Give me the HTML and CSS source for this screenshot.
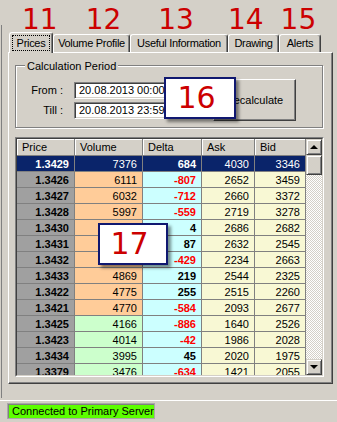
FILE: index.html
```html
<!DOCTYPE html>
<html>

<head>
	<meta charset="utf-8">
	<meta name="viewport" content="width=device-width, initial-scale=1">
	<title>Prices</title>
	<link rel="stylesheet" href="styles.css">
</head>

<body>
	<div class="callouts">
		<span class="callout n11">11</span>
		<span class="callout n12">12</span>
		<span class="callout n13">13</span>
		<span class="callout n14">14</span>
		<span class="callout n15">15</span>
	</div>

	<div class="frame">
		<div class="tabs">
			<div class="tab active t-prices"><span class="focus">Prices</span></div>
			<div class="tab t-volume">Volume Profile</div>
			<div class="tab t-useful">Useful Information</div>
			<div class="tab t-drawing">Drawing</div>
			<div class="tab t-alerts">Alerts</div>
		</div>

		<div class="panel">
			<div class="group">
				<span class="group-title">Calculation Period</span>
				<div class="period-row">
					<div class="fields">
						<label>From :</label>
						<input type="text" class="field" readonly value="20.08.2013 00:00">
						<label>Till :</label>
						<input type="text" class="field" readonly value="20.08.2013 23:59">
					</div>
					<button class="btn">Recalculate</button>
				</div>
			</div>

			<div class="grid">
				<div class="grid-inner">
					<div class="grid-main">
						<div class="row head">
							<div class="cell price">Price</div>
							<div class="cell vol">Volume</div>
							<div class="cell delta">Delta</div>
							<div class="cell ask">Ask</div>
							<div class="cell bid">Bid</div>
						</div>
						<div class="row sel">
							<div class="cell price">1.3429</div>
							<div class="cell vol">7376</div>
							<div class="cell delta">684</div>
							<div class="cell ask">4030</div>
							<div class="cell bid">3346</div>
						</div>
						<div class="row">
							<div class="cell price">1.3426</div>
							<div class="cell vol hi">6111</div>
							<div class="cell delta neg">-807</div>
							<div class="cell ask">2652</div>
							<div class="cell bid">3459</div>
						</div>
						<div class="row">
							<div class="cell price">1.3427</div>
							<div class="cell vol hi">6032</div>
							<div class="cell delta neg">-712</div>
							<div class="cell ask">2660</div>
							<div class="cell bid">3372</div>
						</div>
						<div class="row">
							<div class="cell price">1.3428</div>
							<div class="cell vol hi">5997</div>
							<div class="cell delta neg">-559</div>
							<div class="cell ask">2719</div>
							<div class="cell bid">3278</div>
						</div>
						<div class="row">
							<div class="cell price">1.3430</div>
							<div class="cell vol hi">5711</div>
							<div class="cell delta">4</div>
							<div class="cell ask">2686</div>
							<div class="cell bid">2682</div>
						</div>
						<div class="row">
							<div class="cell price">1.3431</div>
							<div class="cell vol hi">5420</div>
							<div class="cell delta">87</div>
							<div class="cell ask">2632</div>
							<div class="cell bid">2545</div>
						</div>
						<div class="row">
							<div class="cell price">1.3432</div>
							<div class="cell vol hi">5063</div>
							<div class="cell delta neg">-429</div>
							<div class="cell ask">2234</div>
							<div class="cell bid">2663</div>
						</div>
						<div class="row">
							<div class="cell price">1.3433</div>
							<div class="cell vol hi">4869</div>
							<div class="cell delta">219</div>
							<div class="cell ask">2544</div>
							<div class="cell bid">2325</div>
						</div>
						<div class="row">
							<div class="cell price">1.3422</div>
							<div class="cell vol hi">4775</div>
							<div class="cell delta">255</div>
							<div class="cell ask">2515</div>
							<div class="cell bid">2260</div>
						</div>
						<div class="row">
							<div class="cell price">1.3421</div>
							<div class="cell vol hi">4770</div>
							<div class="cell delta neg">-584</div>
							<div class="cell ask">2093</div>
							<div class="cell bid">2677</div>
						</div>
						<div class="row">
							<div class="cell price">1.3425</div>
							<div class="cell vol lo">4166</div>
							<div class="cell delta neg">-886</div>
							<div class="cell ask">1640</div>
							<div class="cell bid">2526</div>
						</div>
						<div class="row">
							<div class="cell price">1.3423</div>
							<div class="cell vol lo">4014</div>
							<div class="cell delta neg">-42</div>
							<div class="cell ask">1986</div>
							<div class="cell bid">2028</div>
						</div>
						<div class="row">
							<div class="cell price">1.3434</div>
							<div class="cell vol lo">3995</div>
							<div class="cell delta">45</div>
							<div class="cell ask">2020</div>
							<div class="cell bid">1975</div>
						</div>
						<div class="row">
							<div class="cell price">1.3379</div>
							<div class="cell vol lo">3476</div>
							<div class="cell delta neg">-634</div>
							<div class="cell ask">1421</div>
							<div class="cell bid">2055</div>
						</div>
					</div>

					<div class="vscroll">
						<div class="sb-btn up"></div>
						<div class="sb-track">
							<div class="sb-thumb"></div>
						</div>
						<div class="sb-btn down"></div>
					</div>
				</div>
			</div>
		</div>
	</div>

	<div class="status">
		<span class="conn">Connected to Primary Server</span>
	</div>

	<!-- numbered callouts over the content -->
	<div class="note n16">16</div>
	<div class="note n17">17</div>
</body>

</html>
```

FILE: styles.css
```css
body {
	margin: 0;
	width: 337px;
	height: 422px;
	overflow: hidden;
	position: relative;
	background-color: #d4d0c8;
	color: black;
	font: 11px "Liberation Sans", Arial, sans-serif;
}

.callouts {
	display: flex;
	height: 25px;
	box-sizing: border-box;
	padding-top: 6px;
	color: #cc0000;
	font: 28px/28px "DejaVu Sans", sans-serif;
}

.callout.n11 {
	margin-left: 22px;
}

.callout.n12 {
	margin-left: 28px;
}

.callout.n13 {
	margin-left: 37px;
}

.callout.n14 {
	margin-left: 34px;
}

.callout.n15 {
	margin-left: 17px;
}

.frame {
	margin-left: 1px;
	border-left: 1px solid #808080;
	height: 373px;
	box-sizing: border-box;
	padding-top: 7px;
}

/* tabs */
.tabs {
	display: flex;
	align-items: flex-end;
	height: 20px;
	padding-left: 7px;
	position: relative;
	z-index: 1;
}

.tab {
	height: 18px;
	box-sizing: border-box;
	border: 1px solid;
	border-color: #fff #404040 transparent #fff;
	border-bottom: 0;
	border-radius: 3px 3px 0 0;
	box-shadow: inset -1px 0 #808080;
	text-align: center;
	line-height: 17px;
	letter-spacing: -0.3px;
	white-space: nowrap;
}

.tab.active {
	height: 21px;
	margin-bottom: -1px;
	padding-top: 2px;
	background-color: #d4d0c8;
}

.tab .focus {
	display: inline-block;
	padding: 0 4px;
	line-height: 14px;
	outline: 1px dotted black;
}

.t-prices {
	width: 44px;
}

.t-volume {
	width: 77px;
}

.t-useful {
	width: 98px;
}

.t-drawing {
	width: 51px;
}

.t-alerts {
	width: 42px;
}

.panel {
	margin-left: 6px;
	width: 325px;
	height: 332px;
	box-sizing: border-box;
	padding-left: 6px;
	border: 1px solid;
	border-color: #fff #404040 #404040 #fff;
	box-shadow: inset -1px -1px #808080;
}

/* calculation period */
.group {
	position: relative;
	margin-top: 12px;
	width: 308px;
	box-sizing: border-box;
	padding: 13px 0 6px 0;
	border: 1px solid #808080;
	box-shadow: inset 1px 1px #fff, 1px 1px #fff;
}

.group-title {
	position: absolute;
	top: -6px;
	left: 9px;
	padding: 0 2px;
	line-height: 13px;
	background-color: #d4d0c8;
}

.period-row {
	display: flex;
	align-items: center;
}

.fields {
	display: grid;
	grid-template-columns: 47px 131px;
	column-gap: 11px;
	row-gap: 3px;
	align-items: center;
}

.fields label {
	text-align: right;
}

.field {
	height: 17px;
	box-sizing: border-box;
	margin: 0;
	padding: 0 0 0 4px;
	border: 1px solid;
	border-color: #808080 #fff #fff #808080;
	box-shadow: inset 1px 1px #404040, inset -1px -1px #d4d0c8;
	background-color: white;
	color: black;
	font: 11px "Liberation Sans", Arial, sans-serif;
	outline: none;
}

.btn {
	margin-left: 8px;
	width: 83px;
	height: 42px;
	padding: 0;
	border: 1px solid;
	border-color: #fff #404040 #404040 #fff;
	box-shadow: inset -1px -1px #808080;
	background-color: #d4d0c8;
	color: black;
	font: 11px "Liberation Sans", Arial, sans-serif;
}

/* price grid */
.grid {
	margin-top: 9px;
	width: 309px;
	height: 240px;
	box-sizing: border-box;
	border: 1px solid;
	border-color: #808080 #fff #fff #808080;
}

.grid-inner {
	display: flex;
	height: 100%;
	box-sizing: border-box;
	border: 1px solid;
	border-color: #404040 #d4d0c8 #d4d0c8 #404040;
}

.grid-main {
	width: 289px;
	overflow: hidden;
}

.row {
	display: flex;
}

.cell {
	height: 16px;
	box-sizing: border-box;
	padding-right: 5px;
	border-right: 1px solid #808080;
	border-bottom: 1px solid #808080;
	text-align: right;
	line-height: 17px;
	white-space: nowrap;
}

.cell.price {
	width: 58px;
	background-color: #a0a0a0;
	font-weight: bold;
}

.cell.vol {
	width: 68px;
}

.cell.vol.hi {
	background-color: #ffcc99;
}

.cell.vol.lo {
	background-color: #ccffcc;
}

.cell.delta {
	width: 59px;
	background-color: #ccffff;
	font-weight: bold;
}

.cell.delta.neg {
	color: red;
}

.cell.ask {
	width: 53px;
	background-color: #f8f8d4;
}

.cell.bid {
	width: 51px;
	background-color: #f8f8d4;
}

.row.head .cell {
	height: 17px;
	padding: 0 0 0 5px;
	text-align: left;
	font-weight: normal;
	background-color: #d4d0c8;
	box-shadow: inset 1px 1px #fff;
}

.row.sel .cell {
	background-color: #0a246a;
	color: white;
}

/* scrollbar */
.vscroll {
	width: 16px;
	display: flex;
	flex-direction: column;
}

.sb-btn,
.sb-thumb {
	height: 16px;
	box-sizing: border-box;
	background-color: #d4d0c8;
	border: 1px solid;
	border-color: #d4d0c8 #404040 #404040 #d4d0c8;
	box-shadow: inset 1px 1px #fff, inset -1px -1px #808080;
}

.sb-btn {
	display: flex;
	align-items: center;
	justify-content: center;
}

.sb-btn::after {
	content: "";
	border-left: 4px solid transparent;
	border-right: 4px solid transparent;
}

.sb-btn.up::after {
	border-bottom: 4px solid black;
}

.sb-btn.down::after {
	border-top: 4px solid black;
}

.sb-track {
	flex: 1;
	background: repeating-conic-gradient(#d4d0c8 0 25%, #fff 0 50%) 0 0 / 2px 2px;
}

.sb-thumb {
	height: 20px;
}

/* status bar */
.status {
	margin-top: 2px;
	border-top: 1px solid #fff;
	padding: 2px 0 0 7px;
}

.conn {
	display: inline-block;
	width: 148px;
	height: 16px;
	box-sizing: border-box;
	padding-left: 4px;
	border: 1px solid #a8a8a8;
	box-shadow: inset 1px 1px #808080;
	background-color: #5cff00;
	line-height: 15px;
	white-space: nowrap;
}

.note {
	position: absolute;
	box-sizing: border-box;
	height: 42px;
	padding-right: 7px;
	border: 2px solid #101870;
	background-color: white;
	box-shadow: 3px 3px 3px rgba(0, 0, 0, 0.45);
	color: #cc0000;
	font: 30px/38px "DejaVu Sans", sans-serif;
	text-align: center;
}

.note.n16 {
	left: 164px;
	top: 77px;
	width: 72px;
}

.note.n17 {
	left: 98px;
	top: 223px;
	width: 70px;
}
```
